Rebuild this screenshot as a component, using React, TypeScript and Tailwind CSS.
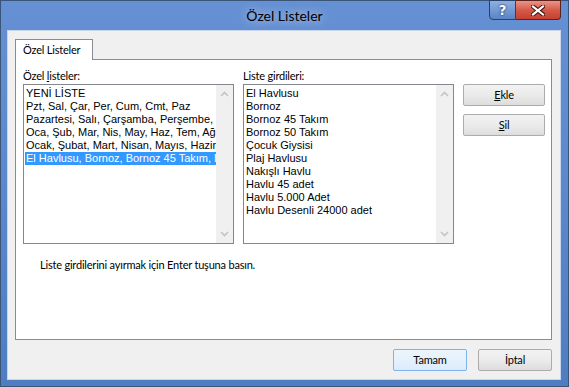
import React from "react";

const ui = "font-['Lato','Liberation_Sans',sans-serif] text-[11px] tracking-[-0.2px] text-black";
const listFont = "font-['Liberation_Sans','Arial',sans-serif] text-[11px] leading-[13px] text-black";

const ozelListeler = [
  "YENİ LİSTE",
  "Pzt, Sal, Çar, Per, Cum, Cmt, Paz",
  "Pazartesi, Salı, Çarşamba, Perşembe, Cuma, Cumartesi, Pazar",
  "Oca, Şub, Mar, Nis, May, Haz, Tem, Ağu, Eyl, Eki, Kas, Ara",
  "Ocak, Şubat, Mart, Nisan, Mayıs, Haziran, Temmuz, Ağustos",
  "El Havlusu, Bornoz, Bornoz 45 Takım, Bornoz 50 Takım",
];

const girdiler = [
  "El Havlusu",
  "Bornoz",
  "Bornoz 45 Takım",
  "Bornoz 50 Takım",
  "Çocuk Giysisi",
  "Plaj Havlusu",
  "Nakışlı Havlu",
  "Havlu 45 adet",
  "Havlu 5.000 Adet",
  "Havlu Desenli 24000 adet",
];

function Chevron({ up }: { up?: boolean }) {
  return (
    <svg width="9" height="6" viewBox="0 0 9 6">
      <path
        d={up ? "M1 5 L4.5 1.5 L8 5" : "M1 1 L4.5 4.5 L8 1"}
        fill="none"
        stroke="#c4c4c4"
        strokeWidth="1.6"
      />
    </svg>
  );
}

function ListBox({
  items,
  selected,
}: {
  items: string[];
  selected?: number;
}) {
  return (
    <div className="flex w-[211px] h-[160px] border border-[#828790] bg-white">
      <div className={`flex-1 min-w-0 pt-[2px] pl-[1px] overflow-hidden ${listFont}`}>
        {items.map((item, i) => (
          <div
            key={i}
            className={`h-[13px] pl-[1px] whitespace-nowrap overflow-hidden ${
              i === selected ? "bg-[#3399ff] text-white" : ""
            }`}
          >
            {item}
          </div>
        ))}
      </div>
      <div className="w-[17px] bg-[#f0f0f0] flex flex-col items-center justify-between py-[6px]">
        <Chevron up />
        <Chevron />
      </div>
    </div>
  );
}

function Button({
  children,
  primary,
  w = "w-[82px]",
}: {
  children: React.ReactNode;
  primary?: boolean;
  w?: string;
}) {
  return (
    <div
      className={`${w} h-[22px] flex items-center justify-center rounded-[2px] border ${
        primary
          ? "border-[#7eb4ea] bg-gradient-to-b from-[#edf5fc] to-[#dcecfc]"
          : "border-[#acacac] bg-gradient-to-b from-[#f2f2f2] via-[#ebebeb] to-[#dddddd]"
      } ${ui}`}
    >
      {children}
    </div>
  );
}

export default function App() {
  return (
    <div className="w-[569px] h-[387px] border border-[#3b5577] bg-gradient-to-b from-[#6590d3] via-[#5b88cd] to-[#4f7dc2] flex flex-col">
      {/* başlık çubuğu */}
      <div className="relative h-[29px] flex items-center justify-center">
        <span className="font-['Lato','Liberation_Sans',sans-serif] text-[14px] text-black [text-shadow:0_0_10px_rgba(255,255,255,0.8)] mt-[-1px]">
          Özel Listeler
        </span>
        <div className="absolute top-[-1px] right-[7px] flex">
          <div className="w-[27px] h-[20px] border border-[#2a426b] rounded-bl-[4px] bg-gradient-to-b from-[#8eb0e0] to-[#5a84c4] flex items-center justify-center">
            <span className="font-['DejaVu_Sans',sans-serif] font-bold text-[14px] leading-none text-white [text-shadow:0_0_2px_#1c2c48,0_0_1px_#1c2c48]">
              ?
            </span>
          </div>
          <div className="w-[45px] h-[20px] border border-l-0 border-[#5c231d] rounded-br-[4px] bg-gradient-to-b from-[#eb9487] via-[#d45a4a] to-[#c6402f] flex items-center justify-center">
            <svg width="14" height="11" viewBox="0 0 14 11">
              <path d="M2 1.5 L12 9.5 M12 1.5 L2 9.5" stroke="#3a1612" strokeWidth="4.2" strokeLinecap="square" />
              <path d="M2 1.5 L12 9.5 M12 1.5 L2 9.5" stroke="#ffffff" strokeWidth="2.2" strokeLinecap="square" />
            </svg>
          </div>
        </div>
      </div>

      {/* istemci alanı */}
      <div className="ml-[6px] mr-[7px] h-[350px] border border-[#c9d6ea] bg-[#f0f0f0] pl-[7px] pr-[8px] pt-[8px] flex flex-col">
        <div className="w-[78px] h-[21px] border border-b-0 border-[#898c95] bg-white mb-[-1px] relative z-10 flex items-center pl-[7px]">
          <span className={`${ui} whitespace-nowrap`}>Özel Listeler</span>
        </div>
        <div className="h-[281px] border border-[#898c95] bg-white pl-[7px] pt-[8px] flex flex-col">
          <div className="flex gap-[9px]">
            <div className="flex flex-col">
              <div className={`${ui} leading-[15px] mb-[1px]`}>
                Özel <span className="underline">l</span>isteler:
              </div>
              <ListBox items={ozelListeler} selected={5} />
            </div>
            <div className="flex flex-col">
              <div className={`${ui} leading-[15px] mb-[1px]`}>
                Liste <span className="underline">g</span>irdileri:
              </div>
              <ListBox items={girdiler} />
            </div>
            <div className="flex flex-col gap-[8px] pt-[16px]">
              <Button>
                <span className="underline">E</span>kle
              </Button>
              <Button>
                <span className="underline">S</span>il
              </Button>
            </div>
          </div>
          <div className={`${ui} leading-[15px] mt-[13px] pl-[17px]`}>
            Liste girdilerini ayırmak için Enter tuşuna basın.
          </div>
        </div>
        <div className="flex justify-end gap-[11px] mt-[9px]">
          <Button primary w="w-[74px]">Tamam</Button>
          <Button w="w-[74px]">İptal</Button>
        </div>
      </div>
    </div>
  );
}
